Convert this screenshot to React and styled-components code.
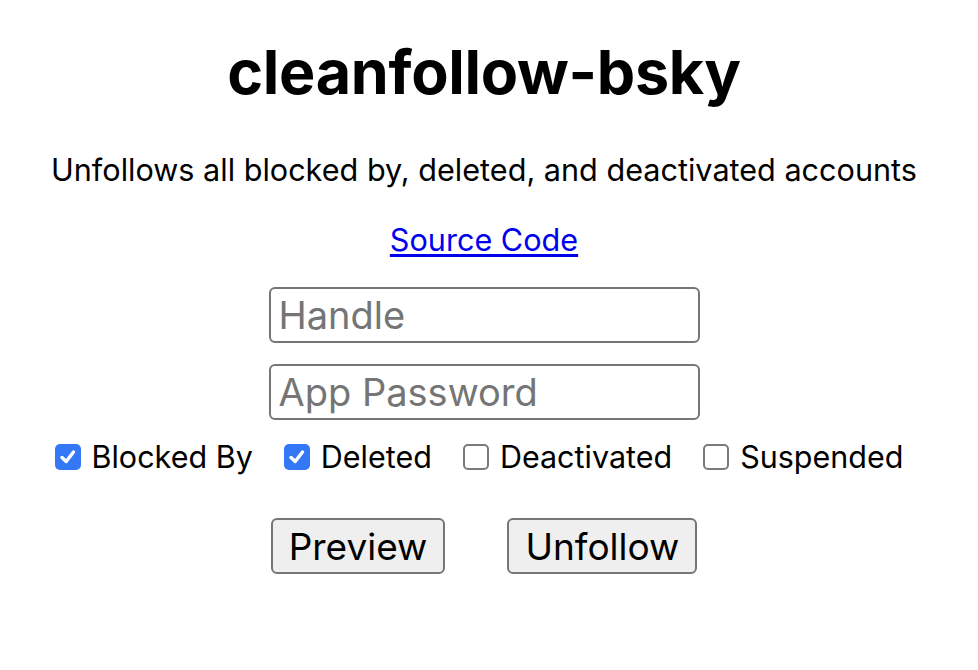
import React, { useState } from "react";
import styled, { createGlobalStyle } from "styled-components";

const GlobalStyle = createGlobalStyle`
  body {
    margin: 0;
    background: #ffffff;
    font-family: Inter, "Liberation Sans", sans-serif;
    color: #000;
  }
`;

const Page = styled.div`
  width: 968px;
  display: flex;
  flex-direction: column;
  align-items: center;
  padding-top: 36px;
`;

const Title = styled.h1`
  margin: 0;
  font-size: 61px;
  font-weight: 700;
  letter-spacing: -0.3px;
  line-height: 72px;
`;

const Subtitle = styled.p`
  margin: 44px 0 0;
  font-size: 30.6px;
  line-height: 36px;
`;

const SourceLink = styled.a`
  margin-top: 34px;
  font-size: 30.6px;
  line-height: 36px;
  color: #0000ee;
  text-decoration: underline;
  text-underline-offset: 3px;
`;

const Form = styled.div`
  display: flex;
  flex-direction: column;
  align-items: center;
  gap: 21px;
  margin-top: 29px;
`;

const TextInput = styled.input`
  box-sizing: border-box;
  width: 431px;
  height: 56px;
  padding: 0 8px;
  border: 2px solid #767676;
  border-radius: 6px;
  font-family: inherit;
  font-size: 38px;
  color: #000;
  outline: none;
  &::placeholder {
    color: #757575;
  }
`;

const Options = styled.div`
  display: flex;
  align-items: center;
  gap: 31px;
  margin-top: 18px;
  margin-right: 10px;
`;

const Option = styled.label`
  display: flex;
  align-items: center;
  gap: 11px;
  font-size: 30.5px;
  cursor: pointer;
`;

const Box = styled.span`
  box-sizing: border-box;
  width: 26px;
  height: 26px;
  border-radius: 5px;
  display: flex;
  align-items: center;
  justify-content: center;
  background: ${(p) => (p.checked ? "#3478f6" : "#fff")};
  border: ${(p) => (p.checked ? "none" : "2px solid #7b7b7b")};
`;

const Buttons = styled.div`
  display: flex;
  gap: 62px;
  margin-top: 43px;
`;

const Button = styled.button`
  box-sizing: border-box;
  height: 56px;
  padding: 0 16px;
  background: #efefef;
  border: 2px solid #767676;
  border-radius: 6px;
  font-family: inherit;
  font-size: 37px;
  color: #000;
`;

const Check = ({ checked, label, onToggle }) => (
  <Option onClick={onToggle}>
    <Box checked={checked}>
      {checked && (
        <svg width="20" height="20" viewBox="0 0 20 20">
          <path d="M4 10.5 L8.2 14.5 L15.5 5" fill="none" stroke="#fff" strokeWidth="3.4" strokeLinecap="round" strokeLinejoin="round" />
        </svg>
      )}
    </Box>
    {label}
  </Option>
);

export default function App() {
  const [opts, setOpts] = useState({
    blocked: true,
    deleted: true,
    deactivated: false,
    suspended: false,
  });
  const toggle = (k) => setOpts({ ...opts, [k]: !opts[k] });

  return (
    <Page>
      <GlobalStyle />
      <Title>cleanfollow-bsky</Title>
      <Subtitle>Unfollows all blocked by, deleted, and deactivated accounts</Subtitle>
      <SourceLink href="#">Source Code</SourceLink>
      <Form>
        <TextInput placeholder="Handle" />
        <TextInput placeholder="App Password" type="password" />
      </Form>
      <Options>
        <Check checked={opts.blocked} label="Blocked By" onToggle={() => toggle("blocked")} />
        <Check checked={opts.deleted} label="Deleted" onToggle={() => toggle("deleted")} />
        <Check checked={opts.deactivated} label="Deactivated" onToggle={() => toggle("deactivated")} />
        <Check checked={opts.suspended} label="Suspended" onToggle={() => toggle("suspended")} />
      </Options>
      <Buttons>
        <Button>Preview</Button>
        <Button>Unfollow</Button>
      </Buttons>
    </Page>
  );
}
